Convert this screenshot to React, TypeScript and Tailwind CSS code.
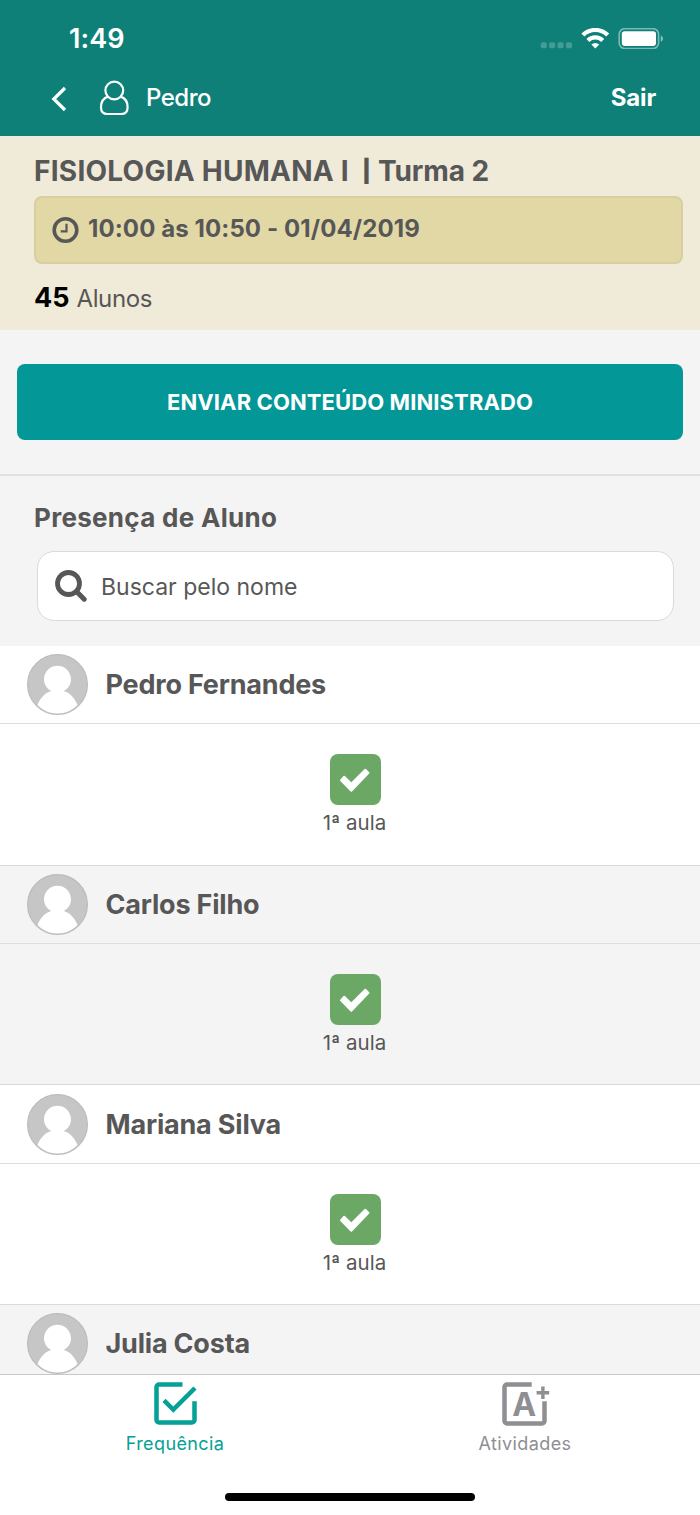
import { useState } from 'react';

interface Lesson {
  label: string;
  present: boolean;
}

interface Student {
  name: string;
  lessons: Lesson[];
}

const initialStudents: Student[] = [
  { name: 'Pedro Fernandes', lessons: [{ label: '1ª aula', present: true }] },
  { name: 'Carlos Filho', lessons: [{ label: '1ª aula', present: true }] },
  { name: 'Mariana Silva', lessons: [{ label: '1ª aula', present: true }] },
  { name: 'Julia Costa', lessons: [] },
];

function StatusBar() {
  return (
    <div className="flex h-[77px] items-center justify-between pl-[69px] pr-[37px]">
      <span className="text-[27px] font-semibold leading-none tracking-[0.1px]">1:49</span>
      <svg width="123" height="21" viewBox="0 0 123 21" fill="currentColor">
        <g opacity="0.22">
          <rect x="0.8" y="14.2" width="6" height="6" rx="1.8" />
          <rect x="9.1" y="14.2" width="6" height="6" rx="1.8" />
          <rect x="17.5" y="14.2" width="6" height="6" rx="1.8" />
          <rect x="26" y="14.2" width="6" height="6" rx="1.8" />
        </g>
        <g fill="none" stroke="currentColor" strokeWidth="4.2">
          <path d="M42.9 7.1a17.5 17.5 0 0 1 24.8 0" />
          <path d="M47.9 12.4a10.5 10.5 0 0 1 14.8 0" />
        </g>
        <path d="M55.3 20.5l-3.9-3.9a5.6 5.6 0 0 1 7.8 0z" />
        <rect x="79.2" y="0.7" width="39.4" height="19.8" rx="5.6" fill="none" stroke="currentColor" strokeWidth="1.6" opacity="0.45" />
        <rect x="81.8" y="3.3" width="34.2" height="14.6" rx="2.8" />
        <path d="M120.8 7.4c1.3.5 2.2 1.7 2.2 3.2s-.9 2.7-2.2 3.2z" opacity="0.5" />
      </svg>
    </div>
  );
}

function NavBar() {
  return (
    <div className="flex h-[59px] items-center pb-[18px] pl-[51px] pr-[44px] text-[24px] leading-none">
      <svg className="mt-[3px]" width="16" height="26" viewBox="0 0 16 26" fill="none" stroke="currentColor" strokeWidth="3.2">
        <path d="M14 2L2.8 13 14 24" />
      </svg>
      <svg className="ml-[32px] mt-px" width="31" height="36" viewBox="0 0 31 36" fill="none" stroke="currentColor" strokeWidth="2.2">
        <circle cx="15.3" cy="10.5" r="8.9" />
        <path d="M9.2 16.6C4.4 18 2 22.2 2 27.2c0 4.6 2 6.8 6.4 6.8h13.8c4.4 0 6.4-2.2 6.4-6.8 0-5-2.4-9.2-7.2-10.6" />
      </svg>
      <span className="ml-[16px] font-medium tracking-[-0.5px]">Pedro</span>
      <span className="ml-auto font-bold tracking-[-0.2px]">Sair</span>
    </div>
  );
}

function ClassInfo() {
  return (
    <section className="h-[194px] bg-[#f0ead8] pl-[34px] pr-[17px] pt-4">
      <h1 className="flex h-9 text-[28px] font-bold leading-[38px]">
        <span className="tracking-[0.25px]">FISIOLOGIA HUMANA I</span>
        <span className="ml-[13px] text-[22px] font-black leading-[38px]">|</span>
        <span className="ml-[7px] tracking-[-0.1px]">Turma 2</span>
      </h1>
      <div className="mt-2 flex h-[68px] items-center rounded-lg border-2 border-[#d9cea0] bg-[#e2d8a6] pl-4">
        <svg width="28" height="28" viewBox="0 0 28 28" fill="none" stroke="currentColor">
          <circle cx="13.5" cy="14" r="11.3" strokeWidth="3.6" />
          <path d="M14.5 7.8v7.5H8.7" strokeWidth="2.2" />
        </svg>
        <span className="-mt-[3px] ml-2 text-[24px] font-bold tracking-[0.1px]">10:00 às 10:50 - 01/04/2019</span>
      </div>
      <p className="mt-4 flex h-9 items-baseline leading-9">
        <b className="text-[27px] font-bold text-black">45</b>
        <span className="ml-[7px] text-[24px] tracking-[-0.4px]">Alunos</span>
      </p>
    </section>
  );
}

function Avatar() {
  return (
    <svg width="61" height="61" viewBox="0 0 61 61">
      <circle cx="30.5" cy="30.5" r="29.9" fill="#c6c6c6" stroke="#bcbcbc" strokeWidth="1.2" />
      <path d="M10.5 51C13.5 43.500 18.500 38.500 24.300 37 20 34.500 17 30.400 17 25.400c0-7.700 6-13.700 13.500-13.700S44 17.700 44 25.400c0 5-3 9.100-7.300 11.600 5.800 1.500 10.800 6.500 13.800 14-5.200 5.300-12 8.500-20 8.500s-14.800-3.200-20-8.500z" fill="#fff" />
    </svg>
  );
}

interface StudentRowProps {
  student: Student;
  striped: boolean;
  onToggle: (label: string) => void;
}

function StudentRow({ student, striped, onToggle }: StudentRowProps) {
  return (
    <li className={`flex h-[219.7px] shrink-0 flex-col ${striped ? 'bg-[#f4f4f4]' : 'bg-white'}`}>
      <div className="flex h-[78.3px] items-center border-b border-[#dedede] pl-[27px]">
        <Avatar />
        <span className="ml-[17.5px] text-[27px] font-bold leading-none tracking-[-0.2px]">{student.name}</span>
      </div>
      <div className="flex flex-1 justify-center border-b border-[#d9d9d9] pl-[9px] pt-[30px]">
        {student.lessons.map((lesson) => (
          <div key={lesson.label} className="flex flex-col items-center">
            <button
              onClick={() => onToggle(lesson.label)}
              className={`ml-px h-[51px] w-[51px] rounded-lg ${lesson.present ? 'bg-[#6ba865]' : 'bg-[#cccccc]'}`}
            >
              {lesson.present && (
                <svg width="51" height="51" viewBox="0 0 51 51" fill="#fff" stroke="#fff" strokeWidth="2" strokeLinejoin="round">
                  <path d="M11 26.3l3.2-3.6 7.1 7.1 14-14.1 3.2 3.2-17.2 17.8z" />
                </svg>
              )}
            </button>
            <span className="mt-[8px] text-[20.5px] leading-5">{lesson.label}</span>
          </div>
        ))}
      </div>
    </li>
  );
}

function TabBar() {
  return (
    <nav className="h-[141px] shrink-0 border-t border-[#c8c8c8] bg-white">
      <div className="grid grid-cols-2 text-[18px] leading-none tracking-[0.4px]">
        <button className="flex flex-col items-center pt-[7px] text-[#05a096]">
          <svg className="ml-px" width="43" height="43" viewBox="0 0 43 43" fill="none" stroke="currentColor" strokeWidth="4.5">
            <path d="M28.5 2.5H5A2.5 2.5 0 0 0 2.5 5v33A2.5 2.5 0 0 0 5 40.5h33a2.5 2.5 0 0 0 2.5-2.5V19.2" />
            <path d="M10 18.3l9.3 9.3L41 6" />
          </svg>
          <span className="mt-[10px]">Frequência</span>
        </button>
        <button className="flex flex-col items-center pt-[7px] text-[#8e8e93]">
          <svg className="ml-[2px]" width="48" height="44" viewBox="0 0 48 44" fill="none" stroke="currentColor" strokeWidth="4.5">
            <path d="M29.7 2.5H5A2.5 2.5 0 0 0 2.5 5v34A2.5 2.5 0 0 0 5 41.5h35a2.5 2.5 0 0 0 2.5-2.5V19.2" />
            <path d="M34.6 10.7h12.6M40.900 4.500v12.500" strokeWidth="3.4" />
            <text x="22.2" y="33.6" textAnchor="middle" fontSize="32" fontWeight="700" letterSpacing="0" fill="currentColor" stroke="none">A</text>
          </svg>
          <span className="mt-[9px]">Atividades</span>
        </button>
      </div>
      <div className="mx-auto mt-10 h-[8px] w-[250px] rounded-full bg-black" />
    </nav>
  );
}

export default function App() {
  const [students, setStudents] = useState(initialStudents);
  const [search, setSearch] = useState('');

  const togglePresence = (name: string, label: string) => {
    setStudents(
      students.map((s) =>
        s.name === name
          ? { ...s, lessons: s.lessons.map((l) => (l.label === label ? { ...l, present: !l.present } : l)) }
          : s
      )
    );
  };

  const visible = students.filter((s) => s.name.toLowerCase().includes(search.toLowerCase()));

  return (
    <div className="flex h-[1515px] w-[700px] flex-col overflow-hidden bg-[#f4f4f4] font-['Inter',sans-serif] text-[#575757]">
      <header className="h-[136px] shrink-0 bg-[#0f8078] text-white">
        <StatusBar />
        <NavBar />
      </header>

      <ClassInfo />

      <div className="h-[146px] shrink-0 border-b-2 border-[#e1e1e1] px-[17px] pt-[34px]">
        <button className="h-[76px] w-full rounded-lg bg-[#039797] text-[22px] font-bold uppercase tracking-[0.1px] text-white">
          Enviar conteúdo ministrado
        </button>
      </div>

      <div className="h-[170px] shrink-0 pl-[37px] pr-[26px] pt-[24px]">
        <h2 className="-ml-[3px] text-[26px] font-bold leading-9 tracking-[0.3px]">Presença de Aluno</h2>
        <label className="mt-[15px] flex h-[70px] items-center rounded-[17px] border border-[#dadade] bg-white pl-[17px]">
          <svg width="32" height="32" viewBox="0 0 32 32" fill="none" stroke="currentColor" strokeLinecap="round">
            <circle cx="13.5" cy="13.5" r="11" strokeWidth="4.8" />
            <path d="M22 22l7.2 7.2" strokeWidth="5" />
          </svg>
          <input
            value={search}
            onChange={(e) => setSearch(e.target.value)}
            placeholder="Buscar pelo nome"
            className="ml-[14px] flex-1 pt-[2px] text-[23px] outline-none placeholder:text-[#575757]"
          />
        </label>
      </div>

      <ul className="flex min-h-0 flex-1 flex-col overflow-hidden">
        {visible.map((student, i) => (
          <StudentRow
            key={student.name}
            student={student}
            striped={i % 2 === 1}
            onToggle={(label) => togglePresence(student.name, label)}
          />
        ))}
      </ul>

      <TabBar />
    </div>
  );
}
